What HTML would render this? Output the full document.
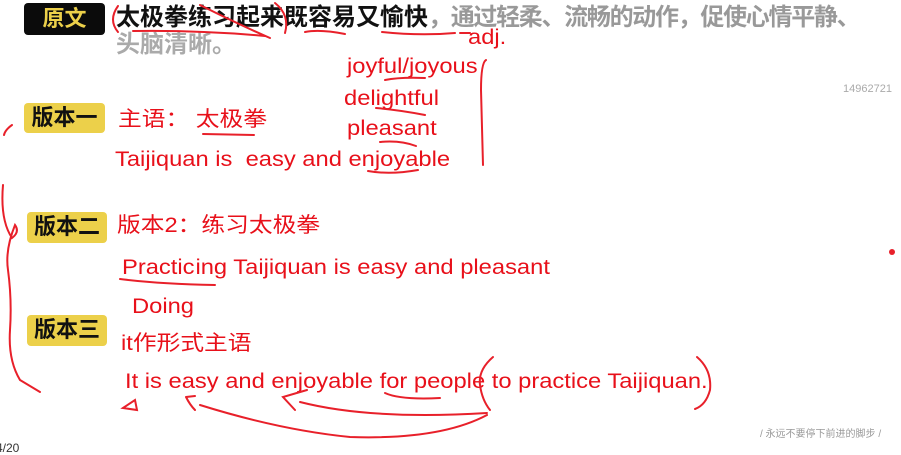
<!DOCTYPE html>
<html><head><meta charset="utf-8"><style>
body{margin:0;width:901px;height:449px;background:#fff;position:relative;overflow:hidden;font-family:"Liberation Sans","Noto Sans CJK SC",sans-serif}
.a{position:absolute;white-space:nowrap;line-height:1}
.r{color:#e8101a;font-size:21px;transform:scaleX(1.13);transform-origin:0 0}
.lab{position:absolute;border-radius:4px;font-weight:bold;font-size:22px;line-height:30px;text-align:center;background:#ecd04a;color:#111}
svg{position:absolute;left:0;top:0}
</style></head><body>
<div class="lab" style="left:24px;top:3px;width:81px;height:32px;background:#0b0b0b;color:#ecd04a;line-height:32px">原文</div>
<div class="a" style="left:116px;top:6px;font-size:24px;font-weight:bold;color:#111">太极拳练习起来既容易又愉快<span style="color:#999;letter-spacing:-1.3px">，通过轻柔、流畅的动作，促使心情平静、</span></div>
<div class="a" style="left:116px;top:33px;font-size:24px;font-weight:bold;color:#aaa">头脑清晰。</div>
<div class="lab" style="left:24px;top:103px;width:81px;height:30px">版本一</div>
<div class="lab" style="left:27px;top:212px;width:80px;height:31px">版本二</div>
<div class="lab" style="left:27px;top:315px;width:80px;height:31px">版本三</div>
<div class="a r" style="left:468px;top:27px">adj.</div>
<div class="a r" style="left:347px;top:56px">joyful/joyous</div>
<div class="a r" style="left:344px;top:88px">delightful</div>
<div class="a r" style="left:347px;top:118px">pleasant</div>
<div class="a r" style="left:118px;top:109px">主语： 太极拳</div>
<div class="a r" style="left:115px;top:149px">Taijiquan is &nbsp;easy and enjoyable</div>
<div class="a r" style="left:117px;top:215px">版本2：练习太极拳</div>
<div class="a r" style="left:122px;top:257px">Practic <span style="margin-left:-5px">ing</span> Taijiquan is easy and pleasant</div>
<div class="a r" style="left:132px;top:296px">Doing</div>
<div class="a r" style="left:121px;top:333px">it作形式主语</div>
<div class="a r" style="left:125px;top:371px">It is easy and enjoyable for people to practice Taijiquan.</div>
<div class="a" style="left:843px;top:84px;font-size:11px;color:#aaa">14962721</div>
<div class="a" style="left:760px;top:430px;font-size:10px;color:#999">/ 永远不要停下前进的脚步 /</div>
<div class="a" style="left:-4px;top:442px;font-size:12px;color:#333">4/20</div>
<svg width="901" height="449" fill="none" stroke="#e8202a" stroke-width="2" stroke-linecap="round">
<path d="M118 6 Q108 20 118 32"/>
<path d="M133 31 Q200 30 265 36"/>
<path d="M200 5 Q240 25 270 38"/>
<path d="M275 3 Q290 15 285 33"/>
<path d="M305 32 Q320 29 345 34"/>
<path d="M382 32 Q420 36 455 33 M460 33 L470 33"/>
<path d="M385 80 Q400 77 425 78"/>
<path d="M376 108 Q400 110 425 115"/>
<path d="M380 142 Q400 140 416 146"/>
<path d="M203 134 L254 135"/>
<path d="M368 171 Q390 175 418 170"/>
<path d="M486 60 Q481 63 481 90 L483 165"/>
<path d="M12 125 Q5 130 4 135 M3 185 Q0 220 12 238 Q20 232 15 225 Q5 250 8 270 Q12 300 10 330 Q8 360 20 380 L40 392"/>
<path d="M120 279 Q160 284 215 285"/>
<path d="M123 408 L135 400 L137 410 Z"/>
<path d="M186 397 Q190 405 195 410 M186 397 L195 396 M200 405 Q280 430 350 437 Q440 440 487 415"/>
<path d="M307 390 L283 397 L295 410 M300 402 Q370 420 487 413"/>
<path d="M385 393 Q400 400 440 398"/>
<path d="M493 357 Q478 370 480 385 Q482 400 490 410"/>
<path d="M697 357 Q712 370 710 390 Q706 405 695 409"/>
</svg>
<div class="a" style="left:889px;top:249px;width:6px;height:6px;border-radius:50%;background:#e8202a"></div>
</body></html>
